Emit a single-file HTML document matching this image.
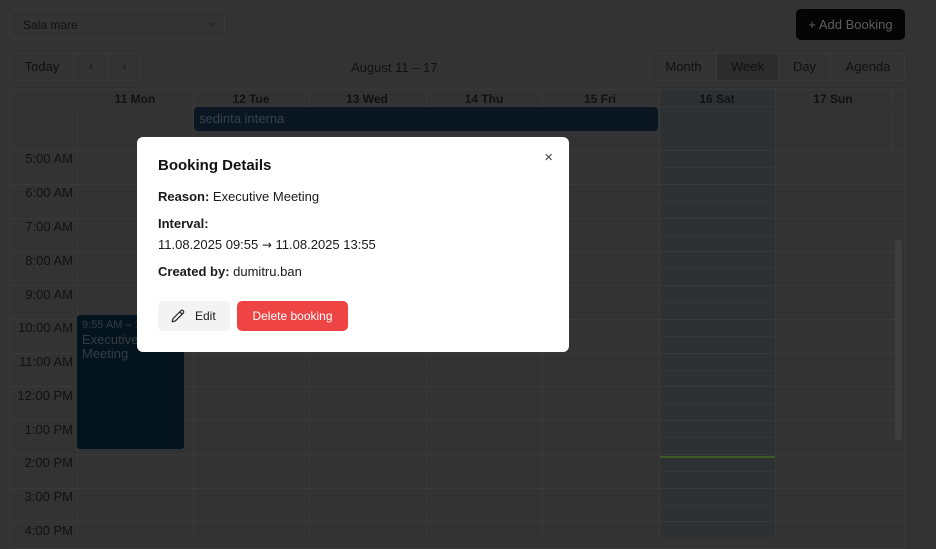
<!DOCTYPE html>
<html><head><meta charset="utf-8"><style>
*{box-sizing:border-box;margin:0;padding:0}
body{width:936px;height:538px;overflow:hidden;background:#333;font-family:"Liberation Sans",Arial,sans-serif;position:relative;color:#111}
.a{position:absolute}
.b{border:1px solid #3a3a3a}
.vl{position:absolute;width:1px;background:#393939}
.hl{position:absolute;height:1px;background:#393939;left:9px;width:896px}
.hl2{position:absolute;height:1px;background:#363636;left:77px;width:814px}
.tl{position:absolute;left:9px;width:64px;text-align:right;font-size:13px;color:#111}
.dh{position:absolute;top:92px;font-size:12px;font-weight:bold;text-align:center;width:116px;color:#111}
</style></head><body>
<div class="a b" style="left:9px;top:9px;width:216px;height:30px;border-radius:5px;font-size:12px;padding:8px 13px;color:#111">Sala mare<svg class="a" style="right:8px;top:12px" width="8" height="5" viewBox="0 0 8 5"><path d="M1 1l3 3 3-3" fill="none" stroke="#222" stroke-width="1"/></svg></div>
<div class="a" style="left:796px;top:9px;width:109px;height:31px;background:#050505;border-radius:5px;color:#5e5e5e;font-size:13px;text-align:center;line-height:31px">+ Add Booking</div>
<div class="a b" style="left:9px;top:53px;width:132px;height:28px;border-radius:4px;font-size:13px;line-height:26px">
<span class="a" style="left:0;width:64px;text-align:center;top:0">Today</span>
<span class="a" style="left:63px;top:0;height:26px;border-left:1px solid #3a3a3a;width:35px;text-align:center;font-size:11px">&lsaquo;</span>
<span class="a" style="left:97px;top:0;height:26px;border-left:1px solid #3a3a3a;width:34px;text-align:center;font-size:11px">&rsaquo;</span></div>
<div class="a" style="left:351px;top:60px;font-size:13px">August 11 – 17</div>
<div class="a b" style="left:649px;top:53px;width:256px;height:28px;border-radius:4px;font-size:13px;line-height:26px">
<span class="a" style="left:0;width:67px;text-align:center">Month</span>
<span class="a" style="left:66px;width:62px;text-align:center;background:#2c2c2c;border-left:1px solid #3a3a3a;height:26px">Week</span>
<span class="a" style="left:128px;width:52px;text-align:center;border-left:1px solid #3a3a3a;height:26px">Day</span>
<span class="a" style="left:180px;width:75px;text-align:center;border-left:1px solid #3a3a3a;height:26px">Agenda</span></div>
<div class="a" style="left:9px;top:89px;width:896px;height:460px;border:1px solid #393939"></div>
<div class="a" style="left:659px;top:90px;width:116px;height:448px;background:#2e3134"></div>
<div class="a" style="left:659px;top:456px;width:116px;height:2px;background:#3f5a26"></div>
<div class="vl" style="left:77px;top:107px;height:431px"></div>
<div class="vl" style="left:193px;top:90px;height:448px"></div>
<div class="vl" style="left:309px;top:90px;height:448px"></div>
<div class="vl" style="left:426px;top:90px;height:448px"></div>
<div class="vl" style="left:542px;top:90px;height:448px"></div>
<div class="vl" style="left:659px;top:90px;height:448px"></div>
<div class="vl" style="left:775px;top:90px;height:448px"></div>
<div class="vl" style="left:891px;top:90px;height:60px"></div>
<div class="hl2" style="top:106px"></div>
<div class="dh" style="left:77px">11 Mon</div><div class="dh" style="left:193px">12 Tue</div><div class="dh" style="left:309px">13 Wed</div><div class="dh" style="left:426px">14 Thu</div><div class="dh" style="left:542px">15 Fri</div><div class="dh" style="left:659px">16 Sat</div><div class="dh" style="left:775px">17 Sun</div>
<div class="a" style="left:194px;top:107px;width:464px;height:24px;background:#0a1722;border-radius:4px;color:#36424c;font-size:13px;padding:4px 5px">sedinta interna</div>
<div class="hl" style="top:150px"></div>
<div class="hl" style="top:184px"></div><div class="hl" style="top:218px"></div><div class="hl" style="top:251px"></div><div class="hl" style="top:285px"></div><div class="hl" style="top:319px"></div><div class="hl" style="top:353px"></div><div class="hl" style="top:386px"></div><div class="hl" style="top:420px"></div><div class="hl" style="top:454px"></div><div class="hl" style="top:488px"></div><div class="hl" style="top:521px"></div>
<div class="hl2" style="top:167px"></div><div class="hl2" style="top:201px"></div><div class="hl2" style="top:235px"></div><div class="hl2" style="top:268px"></div><div class="hl2" style="top:302px"></div><div class="hl2" style="top:336px"></div><div class="hl2" style="top:370px"></div><div class="hl2" style="top:403px"></div><div class="hl2" style="top:437px"></div><div class="hl2" style="top:471px"></div><div class="hl2" style="top:505px"></div>
<div class="tl" style="top:151px">5:00 AM</div><div class="tl" style="top:185px">6:00 AM</div><div class="tl" style="top:219px">7:00 AM</div><div class="tl" style="top:253px">8:00 AM</div><div class="tl" style="top:287px">9:00 AM</div><div class="tl" style="top:320px">10:00 AM</div><div class="tl" style="top:354px">11:00 AM</div><div class="tl" style="top:388px">12:00 PM</div><div class="tl" style="top:422px">1:00 PM</div><div class="tl" style="top:455px">2:00 PM</div><div class="tl" style="top:489px">3:00 PM</div><div class="tl" style="top:523px">4:00 PM</div>
<div class="a" style="left:77px;top:315px;width:107px;height:134px;background:#04141e;border-radius:3px;color:#333d45;padding:4px 5px;overflow:hidden"><div style="font-size:11px;white-space:nowrap">9:55 AM – 1:55 PM</div><div style="font-size:13px;line-height:14px;margin-top:2px">Executive<br>Meeting</div></div>
<div class="a" style="left:895px;top:240px;width:7px;height:200px;background:#3e3e3e;border-radius:3px"></div>
<div class="a" style="left:137px;top:137px;width:432px;height:215px;background:#fff;border-radius:6px;font-size:13px;color:#1a1a1a">
<div class="a" style="left:21px;top:20px;font-size:15px;font-weight:bold;color:#111">Booking Details</div>
<div class="a" style="right:16px;top:12px;font-size:15px;color:#444">&#215;</div>
<div class="a" style="left:21px;top:52px"><b>Reason:</b> Executive Meeting</div>
<div class="a" style="left:21px;top:79px"><b>Interval:</b></div>
<div class="a" style="left:21px;top:100px">11.08.2025 09:55 <span style="font-family:'DejaVu Sans',sans-serif;font-size:12px">→</span> 11.08.2025 13:55</div>
<div class="a" style="left:21px;top:127px"><b>Created by:</b> dumitru.ban</div>
<div class="a" style="left:21px;top:164px;width:72px;height:30px;background:#f3f3f3;border-radius:5px;font-size:12px">
<svg class="a" style="left:13px;top:8px" width="14" height="14" viewBox="0 0 24 24" fill="none" stroke="#222" stroke-width="2" stroke-linecap="round" stroke-linejoin="round"><path d="M17 3a2.8 2.8 0 0 1 4 4L7.5 20.5 2 22l1.5-5.5Z"/><path d="M15 5l4 4"/></svg>
<span class="a" style="left:37px;top:8px">Edit</span></div>
<div class="a" style="left:100px;top:164px;width:111px;height:30px;background:#ef4444;border-radius:5px;color:#fff;font-size:12px;text-align:center;line-height:30px">Delete booking</div>
</div>
</body></html>
